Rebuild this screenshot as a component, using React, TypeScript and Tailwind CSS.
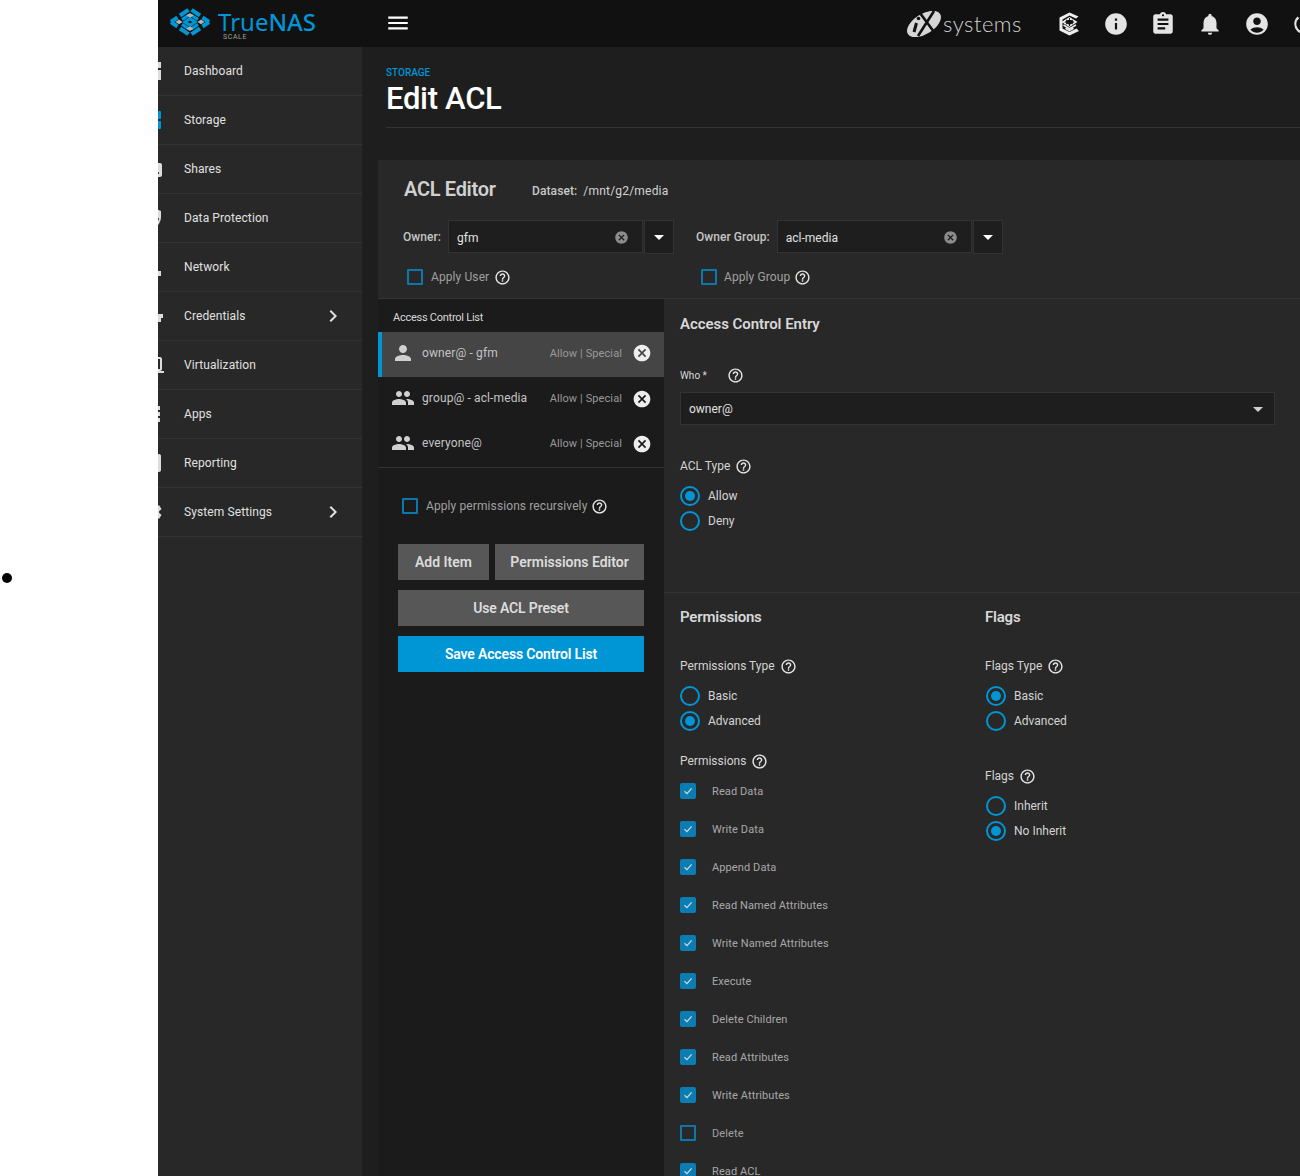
import {
  MdAccountCircle,
  MdApps,
  MdAssignment,
  MdArrowDropDown,
  MdCancel,
  MdChevronRight,
  MdDashboard,
  MdDeviceHub,
  MdDns,
  MdFolderShared,
  MdHelpOutline,
  MdInfo,
  MdInsertChart,
  MdLaptop,
  MdMenu,
  MdNotifications,
  MdPeople,
  MdPerson,
  MdPowerSettingsNew,
  MdSecurity,
  MdSettings,
  MdVpnKey,
} from 'react-icons/md';
import type { IconType } from 'react-icons';

const navItems: { label: string; icon: IconType; active?: boolean; arrow?: boolean }[] = [
  { label: 'Dashboard', icon: MdDashboard },
  { label: 'Storage', icon: MdDns, active: true },
  { label: 'Shares', icon: MdFolderShared },
  { label: 'Data Protection', icon: MdSecurity },
  { label: 'Network', icon: MdDeviceHub },
  { label: 'Credentials', icon: MdVpnKey, arrow: true },
  { label: 'Virtualization', icon: MdLaptop },
  { label: 'Apps', icon: MdApps },
  { label: 'Reporting', icon: MdInsertChart },
  { label: 'System Settings', icon: MdSettings, arrow: true },
];

const aclItems = [
  { label: 'owner@ - gfm', icon: MdPerson, selected: true },
  { label: 'group@ - acl-media', icon: MdPeople },
  { label: 'everyone@', icon: MdPeople },
];

const permissions = [
  { label: 'Read Data', checked: true },
  { label: 'Write Data', checked: true },
  { label: 'Append Data', checked: true },
  { label: 'Read Named Attributes', checked: true },
  { label: 'Write Named Attributes', checked: true },
  { label: 'Execute', checked: true },
  { label: 'Delete Children', checked: true },
  { label: 'Read Attributes', checked: true },
  { label: 'Write Attributes', checked: true },
  { label: 'Delete', checked: false },
  { label: 'Read ACL', checked: true },
];

const Help = () => <MdHelpOutline className="shrink-0 text-[#e8e8e8]" size={17} />;

const Radio = ({ label, checked }: { label: string; checked?: boolean }) => (
  <div className="flex h-[25px] items-center gap-2">
    <span className="flex h-5 w-5 items-center justify-center rounded-full border-2 border-[#0095d5]">
      {checked && <span className="h-[10px] w-[10px] rounded-full bg-[#0095d5]" />}
    </span>
    <span className="text-[12px] text-[#d4d4d4]">{label}</span>
  </div>
);

const Check = ({ label }: { label: string }) => (
  <div className="flex h-[38px] items-center gap-4">
    <span className="-mt-[2px] flex h-4 w-4 items-center justify-center rounded-[2px] bg-[#0b7db3]">
      <svg width="10" height="10" viewBox="0 0 10 10" fill="none">
        <path d="M1.5 5.2 4 7.6 8.6 2.4" stroke="#d8d8d8" strokeWidth="1.2" />
      </svg>
    </span>
    <span className="text-[11px] tracking-[0.1px] text-[#a8a8a8]">{label}</span>
  </div>
);

const EmptyCheck = ({
  label,
  gap = 'gap-2',
  text = 'text-[12px] tracking-[0.1px]',
  box = '',
}: {
  label: string;
  gap?: string;
  text?: string;
  box?: string;
}) => (
  <div className={`flex items-center ${gap}`}>
    <span className={`h-4 w-4 rounded-[1px] border-2 border-[#0b77aa] ${box}`} />
    <span className={`${text} text-[#a0a0a0]`}>{label}</span>
  </div>
);

const ComboBox = ({ value, width }: { value: string; width: string }) => (
  <div className="flex items-start gap-px">
    <div className={`flex h-[33px] ${width} items-center justify-between border border-[#333] bg-[#1e1e1e] pl-2 pr-[13px] pt-[2px]`}>
      <span className="text-[12px] text-[#e0e0e0]">{value}</span>
      <MdCancel size={15} className="text-[#8c8c8c]" />
    </div>
    <div className="flex h-[34px] w-[30px] items-center justify-center border border-[#333] bg-[#1e1e1e]">
      <MdArrowDropDown size={24} className="text-white" />
    </div>
  </div>
);

const Logo = () => (
  <svg width="42" height="30" viewBox="0 0 42 30" fill="none" className="-mt-[3px] shrink-0">
    <g stroke="#0095d5" strokeWidth="4">
      <path d="M11 8.5 19.5 2.8M22.5 2.8 31 8.5M33.5 10.5 40 15M11 21.5 19.5 27.2M22.5 27.2 31 21.5M33.5 19.5 40 15M8.5 10.5 2 15M8.5 19.5 2 15" />
    </g>
    <g stroke="#0095d5" strokeWidth="3.2">
      <path d="M13 12.6 20 8M22 8 29 12.6M13 17.4 20 22M22 22 29 17.4M16 15 21 11.6 26 15 21 18.4Z" />
    </g>
    <g fill="#b4b4b4">
      <path d="M21 6 24.5 8.4 21 10.6 17.5 8.4Z" />
      <path d="M10 12.6 13.5 15 10 17.2 6.5 15Z" />
      <path d="M32 12.6 35.5 15 32 17.2 28.5 15Z" />
      <path d="M21 19.4 24.5 21.6 21 24 17.5 21.6Z" />
    </g>
  </svg>
);

const IxMark = () => (
  <svg width="36" height="26" viewBox="0 0 36 26" className="shrink-0">
    <ellipse cx="18" cy="13" rx="19" ry="10" transform="rotate(-32 18 13)" fill="#d6d6d6" />
    <path d="M12 25 28 0M14 2 31 25" stroke="#111" strokeWidth="2.6" fill="none" />
    <path d="M10.5 12 8 21" stroke="#111" strokeWidth="3" />
    <circle cx="12.5" cy="7.5" r="1.8" fill="#111" />
  </svg>
);

const CommandIcon = () => (
  <svg width="25" height="26" viewBox="0 0 24 26" fill="none" className="shrink-0">
    <path d="M21 5.5 12 1.5 2 6.5V19.5L12 24.5 21.5 20 19 17.5 12 21 5 17.5V8.5L12 4.5 18.5 7.5Z" fill="#eee" />
    <path d="M12 7 18.5 11 12 15 5.5 11ZM6 14 12 17.6 18.5 14M8 17.2 12 19.6 16 17.2" stroke="#eee" strokeWidth="1.6" />
    <path d="M12 7V15M8.5 9 15.5 13M15.5 9 8.5 13" stroke="#111" strokeWidth="1" />
  </svg>
);

const Header = () => (
  <header className="flex h-[47px] shrink-0 items-center overflow-hidden bg-[#111]">
    <div className="flex w-[204px] shrink-0 items-center pl-[11px]">
      <Logo />
      <div className="ml-[7px] flex flex-col pt-[2px]">
        <span className="font-['Noto_Sans',sans-serif] text-[24px] leading-[24px] text-[#0095d5]">
          <span className="font-normal">True</span>
          <span className="font-medium">NAS</span>
        </span>
        <span className="pl-[5px] text-[7px] leading-[6px] tracking-[0.6px] text-[#a0a0a0]">SCALE</span>
      </div>
    </div>
    <MdMenu size={26} className="-mt-[1px] ml-[23px] shrink-0 text-white" />
    <div className="ml-auto flex w-[394px] shrink-0 items-center">
      <IxMark />
      <span className="ml-[1px] shrink-0 font-['Lato',sans-serif] text-[22px] font-light tracking-[0.5px] text-[#d0d0d0]">systems</span>
      <div className="ml-[35px] flex shrink-0 items-center gap-[21px]">
        <CommandIcon />
        <MdInfo size={26} className="shrink-0 text-[#e4e4e4]" />
        <MdAssignment size={26} className="shrink-0 text-[#e4e4e4]" />
        <MdNotifications size={26} className="shrink-0 text-[#e4e4e4]" />
        <MdAccountCircle size={26} className="shrink-0 text-[#e4e4e4]" />
        <MdPowerSettingsNew size={26} className="shrink-0 text-[#e4e4e4]" />
      </div>
    </div>
  </header>
);

const Sidebar = () => (
  <aside className="h-full w-[204px] shrink-0 overflow-hidden bg-[#282828]">
    {navItems.map(({ label, icon: Icon, active, arrow }) => (
      <div key={label} className="flex h-[49px] items-center border-b border-[#333]">
        <Icon size={24} className={`-ml-[18px] shrink-0 ${active ? 'text-[#0095d5]' : 'text-[#ddd]'}`} />
        <span className="ml-5 text-[12px] tracking-[0.1px] text-[#e0e0e0]">{label}</span>
        {arrow && <MdChevronRight size={24} className="ml-auto mr-[17px] text-[#e0e0e0]" />}
      </div>
    ))}
  </aside>
);

const AclList = () => (
  <div className="w-[286px] shrink-0 bg-[#1b1b1b]">
    <div className="flex h-[33px] items-center pl-[15px] pt-[5px] text-[11px] tracking-[-0.25px] text-[#d8d8d8]">Access Control List</div>
    <div className="border-b border-[#333]">
      {aclItems.map(({ label, icon: Icon, selected }) => (
        <div
          key={label}
          className={`flex h-[45px] items-center pb-[3px] pr-[12px] ${selected ? 'border-l-4 border-[#0095d5] bg-[#454545] pl-[9px]' : 'pl-[13px]'}`}
        >
          <Icon size={24} className="shrink-0 text-[#d0d0d0]" />
          <span className="ml-[7px] text-[12px] tracking-[0.12px] text-[#c4c4c4]">{label}</span>
          <span className="ml-auto mt-[2px] text-[11px] tracking-[0.1px] text-[#9a9a9a]">Allow | Special</span>
          <MdCancel size={20} className={`ml-[10px] text-[#eee] ${selected ? '' : 'mt-[2px]'}`} />
        </div>
      ))}
    </div>
    <div className="flex items-center gap-[4px] pl-6 pt-[29px]">
      <EmptyCheck label="Apply permissions recursively" />
      <Help />
    </div>
    <div className="ml-5 flex w-[246px] flex-col gap-[10px] pt-[29px] text-[14px] font-semibold tracking-[-0.15px] text-[#dcdcdc]">
      <div className="flex gap-[6px] tracking-[0px]">
        <button className="h-9 w-[91px] bg-[#575757] pt-px">Add Item</button>
        <button className="h-9 w-[149px] bg-[#575757] pt-px">Permissions Editor</button>
      </div>
      <button className="h-9 bg-[#575757] pt-px">Use ACL Preset</button>
      <button className="h-9 bg-[#0095d5] pt-px text-white">Save Access Control List</button>
    </div>
  </div>
);

const Label = ({ children, className = '' }: { children: string; className?: string }) => (
  <div className={`flex items-center gap-[5px] text-[12px] text-[#d4d4d4] ${className}`}>
    {children}
    <Help />
  </div>
);

const SectionTitle = ({ children, className = 'pt-[14px] tracking-[-0.2px]' }: { children: string; className?: string }) => (
  <h3 className={`text-[15px] font-semibold leading-5 text-[#d8d8d8] ${className}`}>{children}</h3>
);

const EntryForm = () => (
  <div className="min-w-0 flex-1 bg-[#282828]">
    <div className="h-[294px] border-b border-[#333] pl-4">
      <SectionTitle className="pt-[15px] tracking-[-0.05px]">Access Control Entry</SectionTitle>
      <div className="mt-[33px] flex items-center text-[10px] text-[#d8d8d8]">
        <span className="w-[47px]">Who *</span>
        <Help />
      </div>
      <div className="mt-[8px] flex h-[33px] w-[595px] items-center justify-between border border-[#333] bg-[#1e1e1e] pl-2 pr-[4px]">
        <span className="text-[12px] text-[#e0e0e0]">owner@</span>
        <MdArrowDropDown size={24} className="text-[#d0d0d0]" />
      </div>
      <Label className="mt-[32px]">ACL Type</Label>
      <div className="mt-[8px]">
        <Radio label="Allow" checked />
        <Radio label="Deny" />
      </div>
    </div>
    <div className="flex pl-4">
      <div className="w-[305px] shrink-0">
        <SectionTitle>Permissions</SectionTitle>
        <Label className="mt-[30px]">Permissions Type</Label>
        <div className="mt-[8px]">
          <Radio label="Basic" />
          <Radio label="Advanced" checked />
        </div>
        <Label className="mt-[19px]">Permissions</Label>
        <div className="mt-[3px]">
          {permissions.map(({ label, checked }) =>
            checked ? (
              <Check key={label} label={label} />
            ) : (
              <div key={label} className="flex h-[38px] items-center">
                <EmptyCheck label={label} gap="gap-4" text="text-[11px] tracking-[0.1px]" box="-mt-[2px]" />
              </div>
            ),
          )}
        </div>
      </div>
      <div>
        <SectionTitle>Flags</SectionTitle>
        <Label className="mt-[30px]">Flags Type</Label>
        <div className="mt-[8px] pl-px">
          <Radio label="Basic" checked />
          <Radio label="Advanced" />
        </div>
        <Label className="mt-[34px]">Flags</Label>
        <div className="mt-[8px] pl-px">
          <Radio label="Inherit" />
          <Radio label="No Inherit" checked />
        </div>
      </div>
    </div>
  </div>
);

const OwnerField = ({ label, value, width }: { label: string; value: string; width: string }) => (
  <div className="flex items-center gap-[7px]">
    <span className="text-[12px] font-medium tracking-[0.05px] text-[#c4c4c4]">{label}</span>
    <ComboBox value={value} width={width} />
  </div>
);

const AclEditor = () => (
  <section className="ml-4 mt-[32px] w-[922px] bg-[#282828]">
    <div className="h-[139px] border-b border-[#333]">
      <div className="flex items-center pl-[26px] pt-[17px]">
        <h2 className="w-[128px] text-[20px] font-semibold leading-6 tracking-[-0.3px] text-[#d0d0d0]">ACL Editor</h2>
        <span className="mt-[3px] text-[12px] font-medium tracking-[0.1px] text-[#c8c8c8]">Dataset:</span>
        <span className="ml-[6px] mt-[3px] text-[12px] tracking-[0.2px] text-[#d4d4d4]">/mnt/g2/media</span>
      </div>
      <div className="flex gap-[22px] pl-[25px] pt-[19px]">
        <OwnerField label="Owner:" value="gfm" width="w-[195px]" />
        <OwnerField label="Owner Group:" value="acl-media" width="w-[195px]" />
      </div>
      <div className="flex pt-[14px]">
        <div className="flex w-[323px] items-center gap-[5px] pl-[29px]">
          <EmptyCheck label="Apply User" />
          <Help />
        </div>
        <div className="flex items-center gap-[4px]">
          <EmptyCheck label="Apply Group" gap="gap-[7px]" />
          <Help />
        </div>
      </div>
    </div>
    <div className="flex h-[900px]">
      <AclList />
      <EntryForm />
    </div>
  </section>
);

export default function App() {
  return (
    <div className="flex h-[1176px] w-[1300px] overflow-hidden bg-white font-[Roboto,sans-serif]">
      <div className="w-[158px] shrink-0 pl-[2px] pt-[573px]">
        <div className="h-[10px] w-[10px] rounded-full bg-black" />
      </div>
      <div className="flex min-w-0 flex-1 flex-col">
        <Header />
        <div className="flex min-h-0 flex-1">
          <Sidebar />
          <main className="min-w-0 flex-1 overflow-hidden bg-[#1e1e1e]">
            <div className="ml-6 flex h-[81px] flex-col border-b border-[#333] pt-[20px]">
              <span className="text-[10px] font-medium uppercase leading-3 text-[#0095d5]">Storage</span>
              <h1 className="mt-[2px] text-[31px] font-medium leading-9 tracking-[-0.3px] text-white">Edit ACL</h1>
            </div>
            <AclEditor />
          </main>
        </div>
      </div>
    </div>
  );
}
